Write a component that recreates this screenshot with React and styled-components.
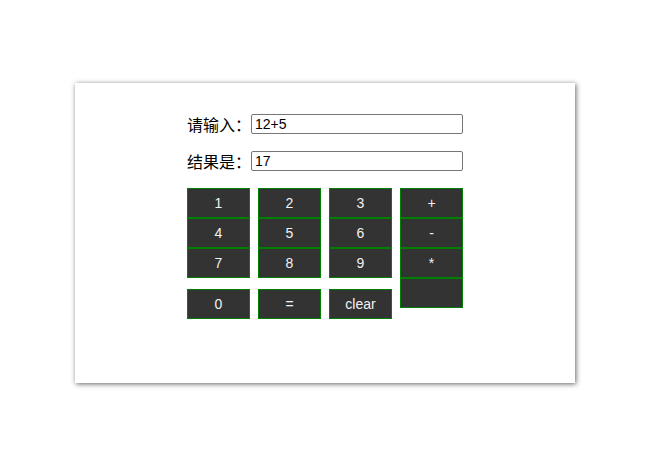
import React from 'react';
import styled, { createGlobalStyle } from 'styled-components';

const GlobalStyle = createGlobalStyle`
  html, body {
    margin: 0;
    height: 100%;
    background: #fff;
    font-family: "Liberation Sans", Arial, sans-serif;
  }
`;

const Page = styled.div`
  min-height: 462px;
  box-sizing: border-box;
  padding-top: 83px;
`;

const Card = styled.div`
  width: 500px;
  height: 300px;
  box-sizing: border-box;
  margin: 0 auto;
  padding-top: 31px;
  background: #fff;
  box-shadow: 1px 1px 5px #666;
`;

const Content = styled.div`
  width: 276px;
  margin: 0 auto;
`;

const Row = styled.div`
  display: flex;
  align-items: center;
  height: 20px;
  margin-bottom: 17px;
`;

const Label = styled.span`
  width: 64px;
  font-family: "Noto Sans CJK SC", sans-serif;
  font-size: 16px;
  color: #000;
  line-height: 20px;
`;

const Field = styled.input`
  width: 212px;
  height: 20px;
  box-sizing: border-box;
  border: 1px solid #767676;
  border-radius: 2px;
  padding: 0 3px;
  font-family: "Liberation Sans", Arial, sans-serif;
  font-size: 14px;
  color: #000;
  outline: none;
`;

const Pad = styled.div`
  display: flex;
  gap: 8px;
`;

const Column = styled.div`
  display: flex;
  flex-direction: column;
  width: 63px;
`;

const Key = styled.button`
  width: 63px;
  height: 30px;
  box-sizing: border-box;
  margin-top: ${(p) => (p.$apart ? '11px' : '0')};
  padding: 0;
  border: 1px solid #008000;
  background: #333;
  color: #f2f2f2;
  font-family: "Liberation Sans", Arial, sans-serif;
  font-size: 14px;
  cursor: pointer;
`;

const columns = [
  ['1', '4', '7', '0'],
  ['2', '5', '8', '='],
  ['3', '6', '9', 'clear'],
];

export default function App() {
  return (
    <Page>
      <GlobalStyle />
      <Card>
        <Content>
          <Row>
            <Label>请输入：</Label>
            <Field defaultValue="12+5" />
          </Row>
          <Row>
            <Label>结果是：</Label>
            <Field defaultValue="17" />
          </Row>
          <Pad>
            {columns.map((col, i) => (
              <Column key={i}>
                {col.map((k, j) => (
                  <Key key={k} $apart={j === 3}>{k}</Key>
                ))}
              </Column>
            ))}
            <Column>
              <Key>+</Key>
              <Key>-</Key>
              <Key>*</Key>
              <Key />
            </Column>
          </Pad>
        </Content>
      </Card>
    </Page>
  );
}
